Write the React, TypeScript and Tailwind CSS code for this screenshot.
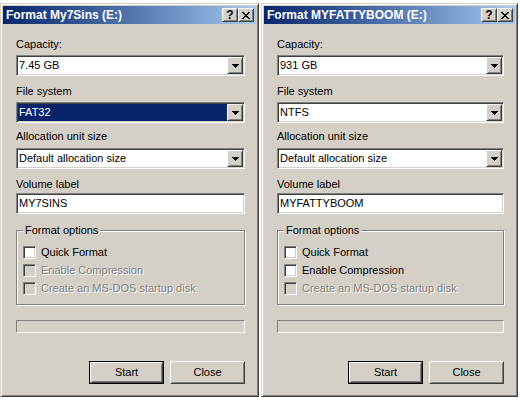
import React from "react";

const raised =
  "border border-t-white border-l-white border-r-[#404040] border-b-[#404040] shadow-[inset_1px_1px_0_#d4d0c8,inset_-1px_-1px_0_#808080] bg-[#d4d0c8]";
const sunken =
  "border border-t-[#808080] border-l-[#808080] border-r-white border-b-white shadow-[inset_1px_1px_0_#404040,inset_-1px_-1px_0_#d4d0c8]";

const CloseGlyph = () => (
  <svg width="8" height="7" viewBox="0 0 8 7" shapeRendering="crispEdges">
    <g fill="#000">
      <rect x="0" y="0" width="2" height="1" />
      <rect x="6" y="0" width="2" height="1" />
      <rect x="1" y="1" width="2" height="1" />
      <rect x="5" y="1" width="2" height="1" />
      <rect x="2" y="2" width="4" height="1" />
      <rect x="3" y="3" width="2" height="1" />
      <rect x="2" y="4" width="4" height="1" />
      <rect x="1" y="5" width="2" height="1" />
      <rect x="5" y="5" width="2" height="1" />
      <rect x="0" y="6" width="2" height="1" />
      <rect x="6" y="6" width="2" height="1" />
    </g>
  </svg>
);

const Arrow = () => (
  <svg width="7" height="4" viewBox="0 0 7 4" shapeRendering="crispEdges">
    <g fill="#000">
      <rect x="0" y="0" width="7" height="1" />
      <rect x="1" y="1" width="5" height="1" />
      <rect x="2" y="2" width="3" height="1" />
      <rect x="3" y="3" width="1" height="1" />
    </g>
  </svg>
);

const TitleBtn = ({ children }: { children: React.ReactNode }) => (
  <div className={`w-[16px] h-[14px] flex items-center justify-center ${raised}`}>{children}</div>
);

const Label = ({ text, className = "" }: { text: string; className?: string }) => (
  <div className={`h-[13px] leading-[13px] ${className}`}>{text}</div>
);

const Combo = ({ value, selected = false, className = "" }: { value: string; selected?: boolean; className?: string }) => (
  <div className={`h-[21px] flex bg-white p-[1px] ${sunken} ${className}`}>
    <div className={`flex-1 flex items-center pl-[1px] ${selected ? "bg-[#0a246a] text-white" : ""}`}>{value}</div>
    <div className={`w-[16px] h-full flex items-center justify-center ${raised}`}>
      <Arrow />
    </div>
  </div>
);

const Check = ({ text, disabled = false }: { text: string; disabled?: boolean }) => (
  <div className="h-[18px] flex items-center">
    <div className={`w-[13px] h-[13px] ${sunken} ${disabled ? "bg-[#d4d0c8]" : "bg-white"}`}></div>
    <span className={`ml-[5px] leading-[13px] ${disabled ? "text-[#808080] [text-shadow:1px_1px_0_#fff]" : ""}`}>
      {text}
    </span>
  </div>
);

type DialogProps = {
  title: string;
  width: string;
  capacity: string;
  fs: string;
  fsSelected?: boolean;
  label: string;
  compression: boolean;
};

const Dialog = ({ title, width, capacity, fs, fsSelected, label, compression }: DialogProps) => (
  <div
    className={`${width} h-[394px] flex flex-col p-[2px] bg-[#d4d0c8] border border-t-[#d4d0c8] border-l-[#d4d0c8] border-r-[#404040] border-b-[#404040] shadow-[inset_1px_1px_0_#fff,inset_-1px_-1px_0_#808080]`}
  >
    <div className="h-[18px] flex items-center pl-[3px] pr-[2px] bg-linear-to-r from-[#0a246a] to-[#a6caf0]">
      <span className="flex-1 text-white font-bold text-[12px] leading-[18px] whitespace-nowrap">{title}</span>
      <TitleBtn>
        <span className="font-bold text-[12px] leading-none text-black">?</span>
      </TitleBtn>
      <TitleBtn>
        <CloseGlyph />
      </TitleBtn>
    </div>

    <div className="flex-1 flex flex-col pl-[13px] pr-[11px]">
      <Label text="Capacity:" className="mt-[14px]" />
      <Combo value={capacity} className="mt-[4px]" />
      <Label text="File system" className="mt-[9px]" />
      <Combo value={fs} selected={fsSelected} className="mt-[4px]" />
      <Label text="Allocation unit size" className="mt-[7px]" />
      <Combo value="Default allocation size" className="mt-[5px]" />
      <Label text="Volume label" className="mt-[9px]" />
      <div className={`mt-[2px] h-[21px] flex items-center pl-[2px] bg-white ${sunken}`}>{label}</div>

      <fieldset className="mt-[10px] border border-[#808080] shadow-[inset_1px_1px_0_#fff,1px_1px_0_#fff] px-[6px] pt-[6px] pb-[7px]">
        <legend className="px-[2px] leading-[13px] bg-[#d4d0c8]">Format options</legend>
        <Check text="Quick Format" />
        <Check text="Enable Compression" disabled={!compression} />
        <Check text="Create an MS-DOS startup disk" disabled />
      </fieldset>

      <div className="mt-[15px] h-[13px] border border-t-[#808080] border-l-[#808080] border-r-white border-b-white"></div>

      <div className="mt-[28px] flex justify-end gap-[6px]">
        <div className="w-[75px] h-[23px] border border-black">
          <div className={`w-full h-full flex items-center justify-center ${raised}`}>Start</div>
        </div>
        <div className={`w-[75px] h-[23px] flex items-center justify-center ${raised}`}>Close</div>
      </div>
    </div>
  </div>
);

export default function App() {
  return (
    <div className="w-[520px] h-[400px] bg-white flex items-start gap-[2px] pt-[3px] font-['Liberation_Sans',Arial,sans-serif] text-[11px] text-black">
      <Dialog
        title="Format My7Sins (E:)"
        width="w-[259px]"
        capacity="7.45 GB"
        fs="FAT32"
        fsSelected
        label="MY7SINS"
        compression={false}
      />
      <Dialog
        title="Format MYFATTYBOOM (E:)"
        width="w-[257px]"
        capacity="931 GB"
        fs="NTFS"
        label="MYFATTYBOOM"
        compression
      />
    </div>
  );
}
